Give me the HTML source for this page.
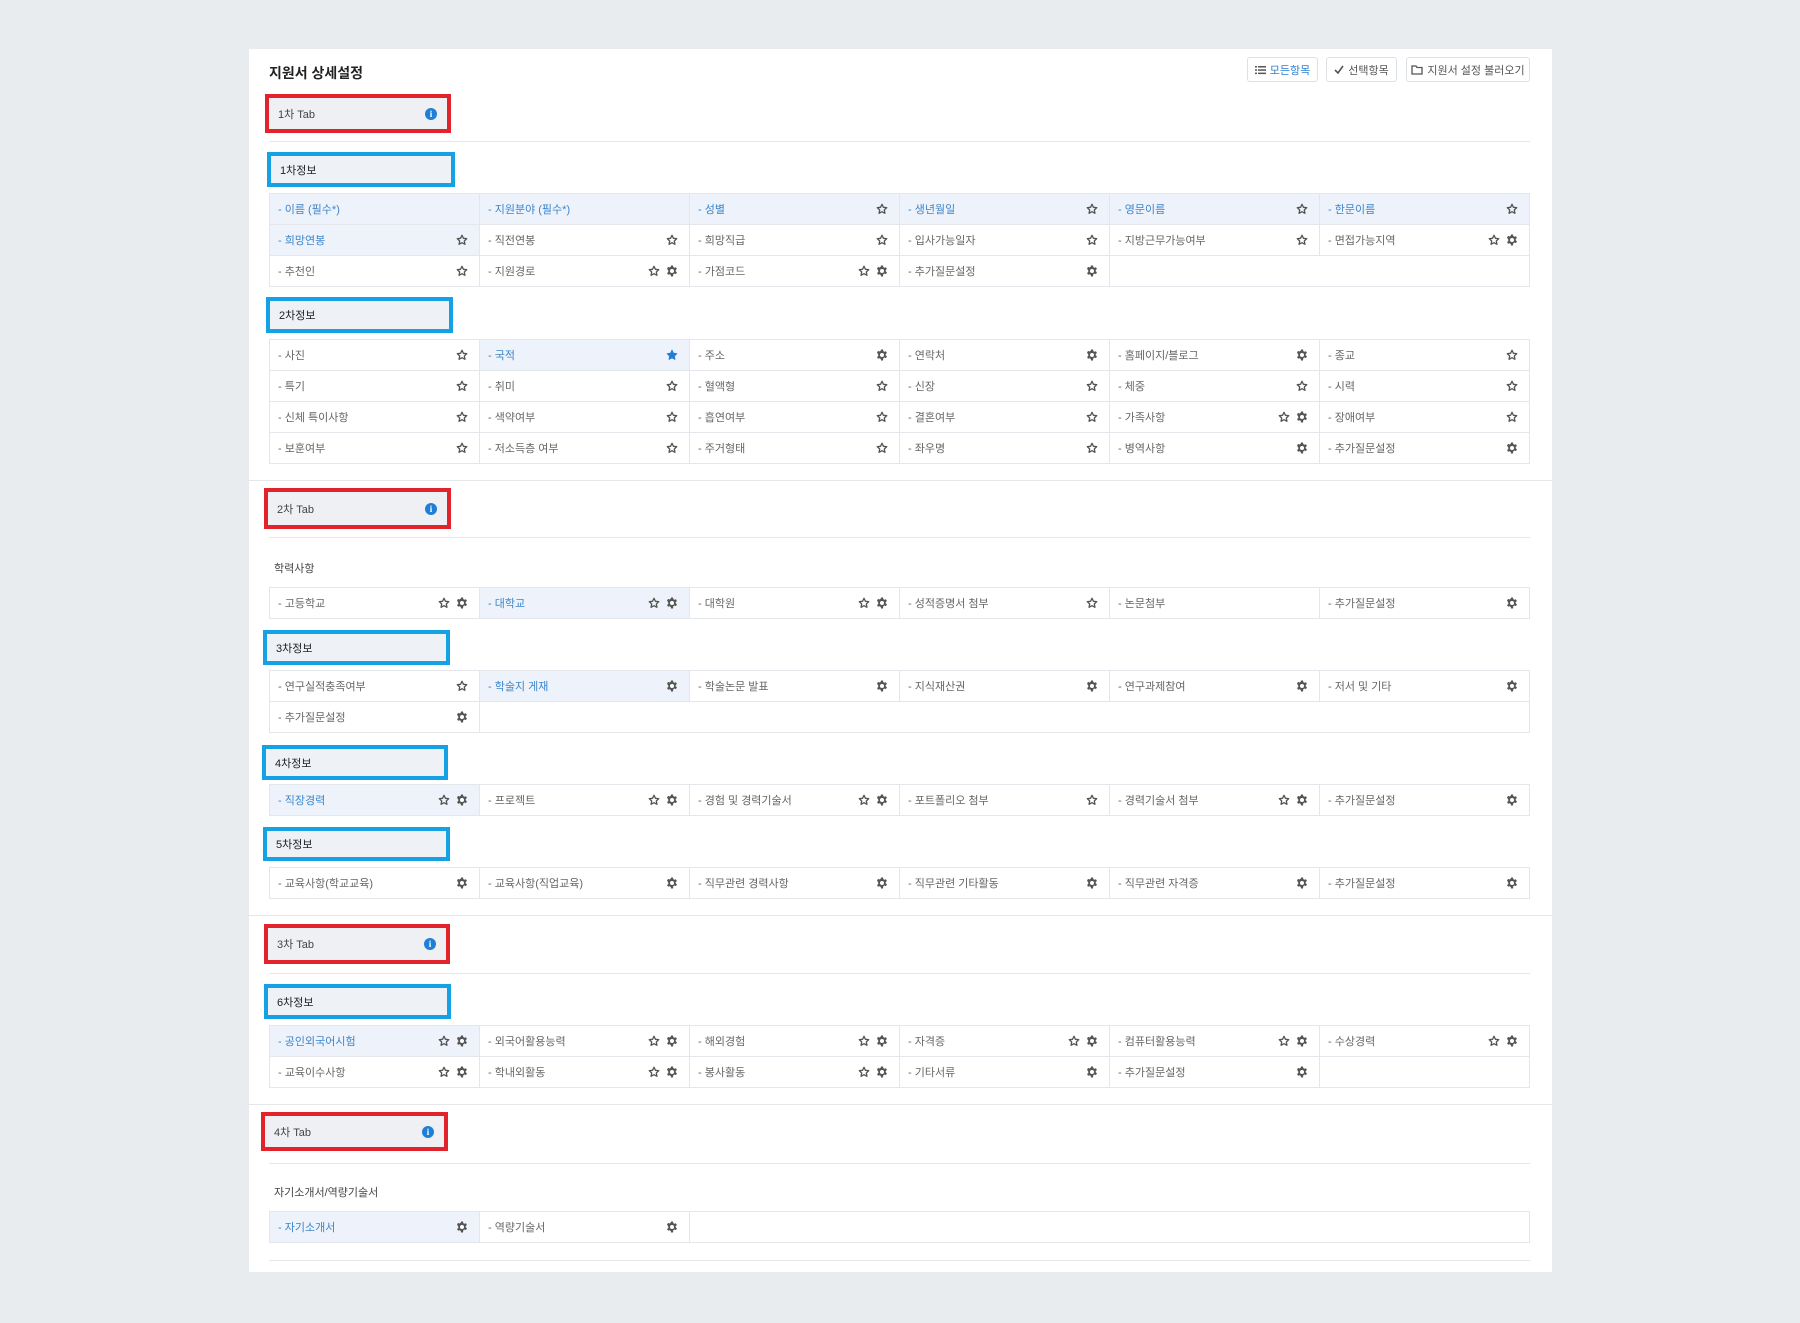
<!DOCTYPE html>
<html><head><meta charset="utf-8">
<style>
*{box-sizing:border-box;margin:0;padding:0}
body{width:1800px;height:1323px;background:#e9ecef;font-family:"Liberation Sans","Noto Sans CJK KR",sans-serif;position:relative;overflow:hidden}
.panel{position:absolute;left:249px;top:49px;width:1303px;height:1223px;background:#fff}
.a{position:absolute}
.title{left:269px;top:63px;font-size:14px;font-weight:bold;color:#222}
.btn{position:absolute;top:57px;height:25px;border:1px solid #dde1e6;border-radius:3px;font-size:11px;color:#555;display:flex;align-items:center;justify-content:center;gap:4px;background:#fff}
.hr{position:absolute;height:1px;background:#e5e7eb;left:269px;width:1261px}
.fhr{position:absolute;height:1px;background:#e5e7eb;left:249px;width:1303px}
.red{position:absolute;border:4px solid #e3232c;background:#eef0f4;font-size:11px;color:#444;display:flex;align-items:center;padding-left:9px}
.red .i{position:absolute;right:10px;top:50%;margin-top:-6px;width:12px;height:12px;border-radius:50%;background:#1f7fd6;color:#fff;font-size:9px;font-weight:bold;text-align:center;line-height:12px;font-family:"Liberation Serif",serif}
.blue{position:absolute;border:4px solid #15a2e4;background:#eef1f6;font-size:11px;color:#222;display:flex;align-items:center;padding-left:9px}
table{position:absolute;left:269px;width:1261px;border-collapse:collapse;table-layout:fixed}
td{height:31px;border:1px solid #e3e6ea;font-size:11px;color:#666;padding:0 10px 0 8px;position:relative;white-space:nowrap}
td.h{background:#eef2fa;color:#3b86cc}
td .ic{position:absolute;right:11px;top:9px;display:flex;gap:6px}
td.e{border-left:1px solid #e3e6ea}
.lbl{position:absolute;left:274px;font-size:11px;color:#444}
svg{display:block}
</style></head><body>
<div class="panel"></div>
<div class="a title">지원서 상세설정</div>
<div class="btn" style="left:1247px;width:71px;color:#2f7fd0"><svg width="11" height="10" viewBox="0 0 11 10"><g fill="#555"><rect x="0" y="1" width="2" height="1.5"/><rect x="0" y="4.3" width="2" height="1.5"/><rect x="0" y="7.6" width="2" height="1.5"/><rect x="3" y="1" width="8" height="1.5"/><rect x="3" y="4.3" width="8" height="1.5"/><rect x="3" y="7.6" width="8" height="1.5"/></g></svg>모든항목</div>
<div class="btn" style="left:1326px;width:71px"><svg width="10" height="9" viewBox="0 0 10 9"><path d="M1 5l3 3 5-7" stroke="#555" stroke-width="1.6" fill="none"/></svg>선택항목</div>
<div class="btn" style="left:1406px;width:124px"><svg width="12" height="10" viewBox="0 0 12 10"><path d="M1 1h4l1 1.5h5v6.5H1z" stroke="#555" stroke-width="1.3" fill="none"/></svg>지원서 설정 불러오기</div>

<div class="red" style="left:265px;top:94px;width:186px;height:39px">1차 Tab<span class="i">i</span></div>
<div class="hr" style="top:141px"></div>
<div class="blue" style="left:267px;top:152px;width:188px;height:35px">1차정보</div>
<div id="t1"></div>

<div class="blue" style="left:266px;top:297px;width:187px;height:36px">2차정보</div>
<div class="fhr" style="top:480px"></div>
<div class="red" style="left:264px;top:488px;width:187px;height:41px">2차 Tab<span class="i">i</span></div>
<div class="hr" style="top:537px"></div>
<div class="lbl" style="top:560px">학력사항</div>
<div class="blue" style="left:263px;top:630px;width:187px;height:35px">3차정보</div>
<div class="blue" style="left:262px;top:745px;width:186px;height:35px">4차정보</div>
<div class="blue" style="left:263px;top:827px;width:187px;height:34px">5차정보</div>
<div class="fhr" style="top:915px"></div>
<div class="red" style="left:264px;top:924px;width:186px;height:40px">3차 Tab<span class="i">i</span></div>
<div class="hr" style="top:973px"></div>
<div class="blue" style="left:264px;top:984px;width:187px;height:35px">6차정보</div>
<div class="fhr" style="top:1104px"></div>
<div class="red" style="left:261px;top:1112px;width:187px;height:39px">4차 Tab<span class="i">i</span></div>
<div class="hr" style="top:1163px"></div>
<div class="lbl" style="top:1184px">자기소개서/역량기술서</div>
<div class="hr" style="top:1260px"></div>

<div id="tables"></div>
<script>
var S='<svg width="12" height="12" viewBox="0 0 24 24"><path d="M12 2.5l2.9 6.1 6.6.8-4.9 4.6 1.3 6.6L12 17.3l-5.9 3.3 1.3-6.6L2.5 9.4l6.6-.8z" fill="none" stroke="#555" stroke-width="2.6" stroke-linejoin="round"/></svg>';
var SF='<svg width="12" height="12" viewBox="0 0 24 24"><path d="M12 2.5l2.9 6.1 6.6.8-4.9 4.6 1.3 6.6L12 17.3l-5.9 3.3 1.3-6.6L2.5 9.4l6.6-.8z" fill="#1f7fd6" stroke="#1f7fd6" stroke-width="2" stroke-linejoin="round"/></svg>';
var G='<svg width="12" height="12" viewBox="0 0 24 24"><path d="M10 1h4l.6 3.2 2.2 1.3 3.1-1.1 2 3.5-2.5 2.1v2.6l2.5 2.1-2 3.5-3.1-1.1-2.2 1.3L14 23h-4l-.6-3.2-2.2-1.3-3.1 1.1-2-3.5 2.5-2.1v-2.6L2.1 7.3l2-3.5 3.1 1.1 2.2-1.3z" fill="#555"/><circle cx="12" cy="12" r="4" fill="#fff"/></svg>';
function ic(t){var o='';for(var c of t){o+=c=='s'?S:c=='S'?SF:G}return o}
function tb(top,rows){var h='<table style="top:'+top+'px"><colgroup>'+'<col>'.repeat(6)+'</colgroup>';
for(var r of rows){h+='<tr>';for(var c of r){if(c[0]=='#'){h+='<td colspan="'+c[1]+'" class="e"></td>';continue}
h+='<td class="'+(c[1]?'h':'')+'">- '+c[0]+'<span class="ic">'+ic(c[2]||'')+'</span></td>'}h+='</tr>'}
return h+'</table>'}
var o='';
o+=tb(193,[[['이름 (필수*)',1],['지원분야 (필수*)',1],['성별',1,'s'],['생년월일',1,'s'],['영문이름',1,'s'],['한문이름',1,'s']],
[['희망연봉',1,'s'],['직전연봉',0,'s'],['희망직급',0,'s'],['입사가능일자',0,'s'],['지방근무가능여부',0,'s'],['면접가능지역',0,'sg']],
[['추천인',0,'s'],['지원경로',0,'sg'],['가점코드',0,'sg'],['추가질문설정',0,'g'],['#',2]]]);
o+=tb(339,[[['사진',0,'s'],['국적',1,'S'],['주소',0,'g'],['연락처',0,'g'],['홈페이지/블로그',0,'g'],['종교',0,'s']],
[['특기',0,'s'],['취미',0,'s'],['혈액형',0,'s'],['신장',0,'s'],['체중',0,'s'],['시력',0,'s']],
[['신체 특이사항',0,'s'],['색약여부',0,'s'],['흡연여부',0,'s'],['결혼여부',0,'s'],['가족사항',0,'sg'],['장애여부',0,'s']],
[['보훈여부',0,'s'],['저소득층 여부',0,'s'],['주거형태',0,'s'],['좌우명',0,'s'],['병역사항',0,'g'],['추가질문설정',0,'g']]]);
o+=tb(587,[[['고등학교',0,'sg'],['대학교',1,'sg'],['대학원',0,'sg'],['성적증명서 첨부',0,'s'],['논문첨부',0,''],['추가질문설정',0,'g']]]);
o+=tb(670,[[['연구실적충족여부',0,'s'],['학술지 게재',1,'g'],['학술논문 발표',0,'g'],['지식재산권',0,'g'],['연구과제참여',0,'g'],['저서 및 기타',0,'g']],
[['추가질문설정',0,'g'],['#',5]]]);
o+=tb(784,[[['직장경력',1,'sg'],['프로젝트',0,'sg'],['경험 및 경력기술서',0,'sg'],['포트폴리오 첨부',0,'s'],['경력기술서 첨부',0,'sg'],['추가질문설정',0,'g']]]);
o+=tb(867,[[['교육사항(학교교육)',0,'g'],['교육사항(직업교육)',0,'g'],['직무관련 경력사항',0,'g'],['직무관련 기타활동',0,'g'],['직무관련 자격증',0,'g'],['추가질문설정',0,'g']]]);
o+=tb(1025,[[['공인외국어시험',1,'sg'],['외국어활용능력',0,'sg'],['해외경험',0,'sg'],['자격증',0,'sg'],['컴퓨터활용능력',0,'sg'],['수상경력',0,'sg']],
[['교육이수사항',0,'sg'],['학내외활동',0,'sg'],['봉사활동',0,'sg'],['기타서류',0,'g'],['추가질문설정',0,'g'],['#',1]]]);
o+=tb(1211,[[['자기소개서',1,'g'],['역량기술서',0,'g'],['#',4]]]);
document.getElementById('tables').innerHTML=o;
</script>
</body></html>
